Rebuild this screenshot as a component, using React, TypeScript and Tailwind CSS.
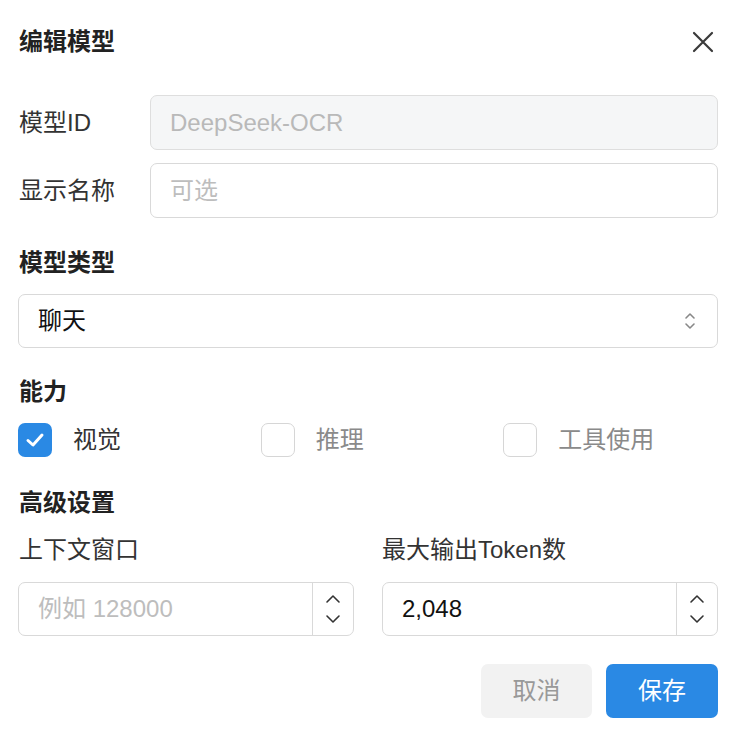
import React from "react";

const font = { fontFamily: '"Liberation Sans", "Noto Sans CJK SC", sans-serif' };

function Stepper() {
  return (
    <div className="w-[41px] h-full border-l border-[#d9d9d9] flex flex-col items-center justify-center gap-[10px]">
      <svg width="16" height="10" viewBox="0 0 16 10" fill="none" stroke="#333" strokeWidth="1.6" strokeLinecap="round" strokeLinejoin="round">
        <path d="M2 8 L8 2 L14 8" />
      </svg>
      <svg width="16" height="10" viewBox="0 0 16 10" fill="none" stroke="#333" strokeWidth="1.6" strokeLinecap="round" strokeLinejoin="round">
        <path d="M2 2 L8 8 L14 2" />
      </svg>
    </div>
  );
}

function Check({ checked, label }: { checked?: boolean; label: string }) {
  return (
    <div className="flex items-center gap-[21px] h-[34px]">
      {checked ? (
        <div className="w-[34px] h-[34px] rounded-[7px] bg-[#2a89e4] flex items-center justify-center">
          <svg width="20" height="16" viewBox="0 0 20 16" fill="none" stroke="#fff" strokeWidth="3" strokeLinecap="round" strokeLinejoin="round">
            <path d="M3 8.5 L8 13 L17 3" />
          </svg>
        </div>
      ) : (
        <div className="w-[34px] h-[34px] rounded-[7px] border border-[#d6d6d6] bg-white" />
      )}
      <span className={"text-[24px] leading-[32px] " + (checked ? "text-[#333]" : "text-[#8a8a8a]")}>{label}</span>
    </div>
  );
}

export default function App() {
  return (
    <div className="w-[740px] h-[740px] bg-white pl-[18px] pr-[22px] pt-[22px]" style={font}>
      <div className="flex items-center justify-between h-[40px]">
        <div className="text-[24px] leading-[32px] font-bold text-[#222] pl-[1px]">编辑模型</div>
        <svg width="22" height="22" viewBox="0 0 22 22" fill="none" stroke="#3a3a3a" strokeWidth="2.2" strokeLinecap="round" className="mr-[4px]">
          <path d="M2 2 L20 20 M20 2 L2 20" />
        </svg>
      </div>

      <div className="mt-[33px] flex items-center">
        <div className="w-[132px] pl-[1px] text-[24px] leading-[32px] text-[#333]">模型ID</div>
        <div className="flex-1 h-[55px] rounded-[7px] border border-[#dedede] bg-[#f5f6f7] flex items-center px-[19px] text-[24px] text-[#b9b9b9]">DeepSeek-OCR</div>
      </div>
      <div className="mt-[13px] flex items-center">
        <div className="w-[132px] pl-[1px] text-[24px] leading-[32px] text-[#333]">显示名称</div>
        <div className="flex-1 h-[55px] rounded-[7px] border border-[#d9d9d9] bg-white flex items-center px-[19px] text-[24px] text-[#bdbdbd]">可选</div>
      </div>

      <div className="mt-[29px] h-[32px] leading-[32px] pl-[1px] text-[24px] font-bold text-[#222]">模型类型</div>
      <div className="mt-[15px] h-[54px] rounded-[7px] border border-[#d9d9d9] bg-white flex items-center justify-between pl-[19px] pr-[20px]">
        <span className="text-[24px] text-[#111]">聊天</span>
        <svg width="14" height="22" viewBox="0 0 14 22" fill="none" stroke="#888" strokeWidth="1.6" strokeLinecap="round" strokeLinejoin="round">
          <path d="M3 8 L7 4 L11 8 M3 14 L7 18 L11 14" />
        </svg>
      </div>

      <div className="mt-[28px] h-[32px] leading-[32px] pl-[1px] text-[24px] font-bold text-[#222]">能力</div>
      <div className="mt-[15px] grid grid-cols-3 gap-x-[28px]">
        <Check checked label="视觉" />
        <Check label="推理" />
        <Check label="工具使用" />
      </div>

      <div className="mt-[30px] h-[32px] leading-[32px] pl-[1px] text-[24px] font-bold text-[#222]">高级设置</div>
      <div className="mt-[15px] grid grid-cols-2 gap-x-[28px]">
        <div>
          <div className="h-[32px] leading-[32px] pl-[1px] text-[24px] text-[#333]">上下文窗口</div>
          <div className="mt-[16px] h-[54px] rounded-[7px] border border-[#d9d9d9] bg-white flex items-center">
            <div className="flex-1 pl-[19px] text-[24px] text-[#bdbdbd]">例如 128000</div>
            <Stepper />
          </div>
        </div>
        <div>
          <div className="h-[32px] leading-[32px] text-[24px] text-[#333]">最大输出Token数</div>
          <div className="mt-[16px] h-[54px] rounded-[7px] border border-[#d9d9d9] bg-white flex items-center">
            <div className="flex-1 pl-[19px] text-[24px] text-[#111]">2,048</div>
            <Stepper />
          </div>
        </div>
      </div>

      <div className="mt-[28px] flex justify-end gap-[14px]">
        <div className="w-[111px] h-[54px] rounded-[7px] bg-[#f2f2f2] flex items-center justify-center text-[24px] text-[#999]">取消</div>
        <div className="w-[112px] h-[54px] rounded-[7px] bg-[#2a89e4] flex items-center justify-center text-[24px] text-white">保存</div>
      </div>
    </div>
  );
}
